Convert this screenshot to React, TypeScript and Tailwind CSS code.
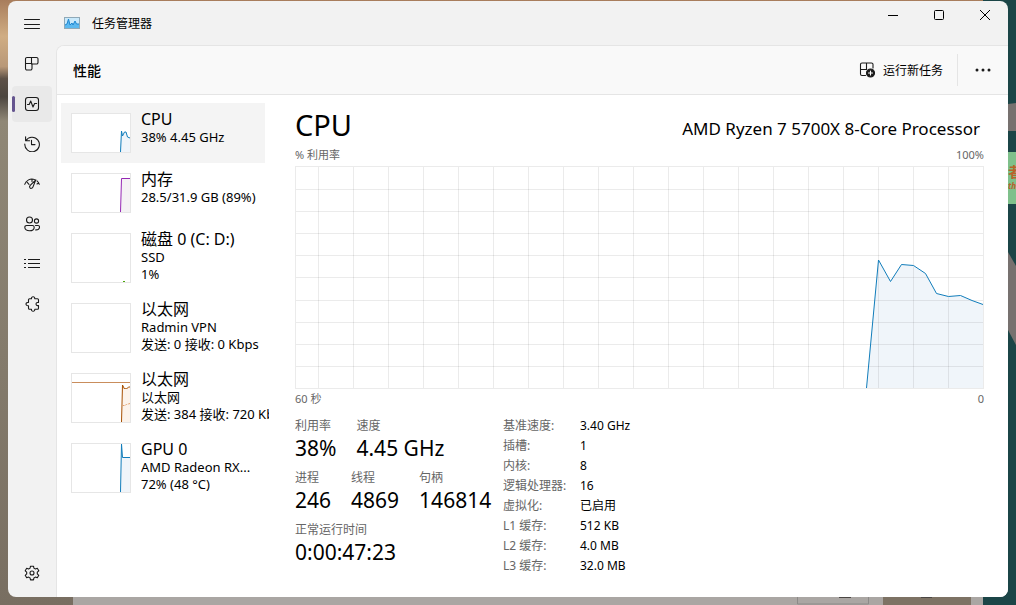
import React, { useState } from 'react';
import clsx from 'clsx';

interface ResourceItem {
  id: string;
  title: string;
  lines: string[];
  tall?: boolean;
  chart: React.ReactNode;
}

const iconProps = {
  width: 16,
  height: 16,
  viewBox: '0 0 16 16',
  fill: 'none',
  stroke: '#1b1b1b',
  strokeLinecap: 'round' as const,
  strokeLinejoin: 'round' as const,
};

const MenuIcon = () => (
  <svg {...iconProps} strokeWidth="1"><path d="M.5 3.5h15M.5 8.5h15M.5 12.5h15" /></svg>
);

const ProcessesIcon = () => (
  <svg {...iconProps} strokeWidth="1.1">
    <path d="M3 1.5h9.500a1.500 1.500 0 0 1 1.500 1.500v3.500a1.500 1.500 0 0 1-1.500 1.500H8v4.500A1.500 1.500 0 0 1 6.500 14H3a1.500 1.500 0 0 1-1.500-1.500V3A1.500 1.500 0 0 1 3 1.500ZM7.500 1.500V8M1.500 7.500H8" />
  </svg>
);

const PerformanceIcon = () => (
  <svg {...iconProps} strokeWidth="1.1">
    <rect x="1.500" y="1.500" width="13" height="13" rx="2.500" />
    <path d="M3.500 8.500h1.700L6.700 5l2.300 6 1.600-3.500h2" />
  </svg>
);

const HistoryIcon = () => (
  <svg {...iconProps} strokeWidth="1.1">
    <path d="M1.600 .8v3.900h4M1.900 4.600A7.300 7.300 0 1 1 .8 8M7.500 4.300v4.300H11" />
  </svg>
);

const StartupIcon = () => (
  <svg {...iconProps} strokeWidth="1.100">
    <path d="M.7 8.300A7.600 7.600 0 0 1 10.400 3.500M13 4.800a7.500 7.500 0 0 1 2.300 3.500M3.200 6.300l1.800 2M8 3.400v2.200M14.700 7l-1.700.9" />
    <path d="M11.800 3.800 6.200 9.400c-1.500 1.700 0 3.800 1.900 2.700.6-.4.8-.9 1-1.500l2.700-6.800Z" />
  </svg>
);

const UsersIcon = () => (
  <svg {...iconProps} strokeWidth="1.100">
    <circle cx="5.500" cy="4" r="3" />
    <circle cx="12.500" cy="5" r="2.100" />
    <path d="M2.500 9.500h6a1.700 1.700 0 0 1 1.700 1.700c0 2.300-2 3.600-4.700 3.600S.8 13.500.8 11.200A1.700 1.700 0 0 1 2.500 9.500ZM11.500 9.500H14a1.500 1.500 0 0 1 1.500 1.500c0 1.900-1.400 3-3.800 2.900" />
  </svg>
);

const DetailsIcon = () => (
  <svg {...iconProps} strokeWidth="1.200" strokeLinecap="butt">
    <path d="M0 3.500h2M4 3.500h12M0 7.500h2M4 7.500h12M0 11.500h2M4 11.500h12" />
  </svg>
);

const ServicesIcon = () => (
  <svg {...iconProps} strokeWidth="1.100">
    <path d="M5.500 2.700h2C7.300 1.500 8 .7 9.100.7s1.800.8 1.600 2h2.800a1 1 0 0 1 1 1v2.800h-.8c-2.200-.1-2.200 3.200 0 3.100h.8v2.700a1 1 0 0 1-1 1h-2.700c.1 1.200-.6 2-1.700 2s-1.800-.8-1.600-2h-2a1 1 0 0 1-1-1V9.700C3.100 9.900 2 9.200 2 8.100s1.100-1.900 2.500-1.600V3.700a1 1 0 0 1 1-1Z" />
  </svg>
);

const SettingsIcon = () => (
  <svg {...iconProps} strokeWidth="1.100">
    <path d="m6.500 1.200-.4 1.900-1.500.9-1.900-.7-1.500 2.500 1.500 1.400v1.700L1.200 10.300l1.500 2.500 1.900-.7 1.500.9.400 1.900h3l.4-1.900 1.500-.9 1.900.7 1.500-2.500-1.500-1.400V7.200l1.500-1.400-1.500-2.500-1.900.7-1.500-.9-.4-1.900Z" />
    <circle cx="8" cy="8" r="2" />
  </svg>
);

const RunTaskIcon = () => (
  <svg {...iconProps} strokeWidth="1.100">
    <path d="M6.500 13.500H3A1.500 1.500 0 0 1 1.500 12V2.500A1.500 1.500 0 0 1 3 1h9.500A1.500 1.500 0 0 1 14 2.500v3.500M7.500 1v6.500M1.500 7.500H7" />
    <circle cx="11.500" cy="11" r="4" fill="#1b1b1b" />
    <path d="M11.500 9v4M9.500 11h4" stroke="#fff" />
  </svg>
);

const AppIcon = () => (
  <svg width="16" height="12" viewBox="0 0 16 12">
    <rect x=".5" y=".5" width="15" height="11" fill="#c9e9fb" stroke="#8fa9b8" />
    <path d="M1 11V8l2-1 1.500-5L6 8l2-2 1 2 2-4 1.500 3H15v4Z" fill="#5bb9f0" />
    <path d="M1 8l2-1 1.500-5L6 8l2-2 1 2 2-4 1.500 3H15" fill="none" stroke="#1c86d1" />
  </svg>
);

const navItems = [
  { label: '进程', icon: ProcessesIcon },
  { label: '性能', icon: PerformanceIcon },
  { label: '应用历史记录', icon: HistoryIcon },
  { label: '启动应用', icon: StartupIcon },
  { label: '用户', icon: UsersIcon },
  { label: '详细信息', icon: DetailsIcon },
  { label: '服务', icon: ServicesIcon },
];

const resources: ResourceItem[] = [
  {
    id: 'cpu',
    title: 'CPU',
    lines: ['38% 4.45 GHz'],
    chart: (
      <>
        <path d="M48 38 49.500 17l1 5 2-4h1.500l1.500 5 2.500 1v14Z" fill="#f0f5fa" />
        <path d="M48.500 38 49.500 17l1 5 2-4h1.500l1.500 5 2.500 1" fill="none" stroke="#117dbb" />
      </>
    ),
  },
  {
    id: 'memory',
    title: '内存',
    lines: ['28.5/31.9 GB (89%)'],
    chart: (
      <>
        <path d="M48.500 38 49.500 4.500H58V38Z" fill="#f4f2f4" />
        <path d="M48.500 38 49.500 4.500H58" fill="none" stroke="#9528b4" />
      </>
    ),
  },
  {
    id: 'disk',
    title: '磁盘 0 (C: D:)',
    lines: ['SSD', '1%'],
    tall: true,
    chart: <path d="M51 47.500h2" stroke="#4da60c" />,
  },
  { id: 'vpn', title: '以太网', lines: ['Radmin VPN', '发送: 0 接收: 0 Kbps'], tall: true, chart: null },
  {
    id: 'ethernet',
    title: '以太网',
    lines: ['以太网', '发送: 384 接收: 720 Kbps'],
    tall: true,
    chart: (
      <>
        <path d="M49.500 48 50.500 11l2 4 3-1 3-1v35Z" fill="#fcf3eb" />
        <path d="M0 8.500h58" stroke="#c98d5c" />
        <path d="M49.500 48 50.500 11l2 4 1-1 1 1 2-2H58" fill="none" stroke="#a74f01" />
        <path d="M50.500 31.500h2l2-1 3.500-1" fill="none" stroke="#dfa070" strokeDasharray="2 1" />
      </>
    ),
  },
  {
    id: 'gpu',
    title: 'GPU 0',
    lines: ['AMD Radeon RX...', '72% (48 °C)'],
    tall: true,
    chart: (
      <>
        <path d="M48.500 48 49.500 0l1 13.500H58V48Z" fill="#f0f5fa" />
        <path d="M48.500 48 49.500 0l1 13.500H58" fill="none" stroke="#117dbb" />
      </>
    ),
  },
];

const statRows = [
  [['利用率', '38%'], ['速度', '4.45 GHz']],
  [['进程', '246'], ['线程', '4869'], ['句柄', '146814']],
  [['正常运行时间', '0:00:47:23']],
];

const specs = [
  ['基准速度:', '3.40 GHz'],
  ['插槽:', '1'],
  ['内核:', '8'],
  ['逻辑处理器:', '16'],
  ['虚拟化:', '已启用'],
  ['L1 缓存:', '512 KB'],
  ['L2 缓存:', '4.0 MB'],
  ['L3 缓存:', '32.0 MB'],
];

const usagePoints = '571.5,222 583.5,94 595.5,115.5 606.5,98.5 618.5,99.5 630.5,107.5 641.5,127.5 653.5,130.5 665.5,129.5 677,134.5 688,138.5';
const gridX = Array.from({ length: 19 }, (_, i) => 23.5 + i * 35);
const gridY = [23, 45, 67, 89, 111, 134, 156, 178, 200];

// Desktop wallpaper that peeks out around the window
function Wallpaper() {
  return (
    <div className="absolute inset-0 overflow-hidden" aria-hidden="true">
      <svg className="h-full w-full" viewBox="0 0 1016 605" preserveAspectRatio="none">
        <defs>
          <linearGradient id="wall" x1="0" y1="0" x2="0" y2="1">
            <stop offset="0" stopColor="#a87d5c" />
            <stop offset=".06" stopColor="#d0ad83" />
            <stop offset=".11" stopColor="#b89878" />
            <stop offset=".13" stopColor="#5d5147" />
            <stop offset=".16" stopColor="#4c463f" />
            <stop offset=".2" stopColor="#8f8776" />
            <stop offset="1" stopColor="#786e61" />
          </linearGradient>
        </defs>
        <rect width="1016" height="605" fill="url(#wall)" />
        <rect x="73" y="590" width="910" height="15" fill="#aaa6a3" />
        <path d="M797.500 590v14h71v-14" fill="none" stroke="#8c8a88" />
        <rect x="883" y="590" width="88" height="15" fill="#7d7264" />
        <path d="M839 597.500h12M921 597.500h11" stroke="#4b4744" />
        <rect x="983" width="33" height="605" fill="#1b4547" />
        <path d="M1000 105 1016 103v28h-16Z" fill="#77716f" />
        <path d="M1008 252 1016 266v79l-8-15Z" fill="#77716f" />
        <rect x="1000" y="152" width="16" height="52" fill="#7fc08b" />
      </svg>
      <div className="absolute top-[162px] right-0 w-2 overflow-hidden font-bold text-[#b9632a]">
        <p className="text-sm leading-5">者</p>
        <p className="text-[8px] leading-2 italic">th</p>
      </div>
    </div>
  );
}

function UsageChart() {
  return (
    <svg className="block h-[223px] w-full" viewBox="0 0 689 223" preserveAspectRatio="none" role="img" aria-label="CPU 利用率">
      <polygon points={`${usagePoints} 688,222`} fill="#f0f5fa" />
      <g stroke="#000" strokeOpacity=".08" shapeRendering="crispEdges">
        {gridX.map(x => <path key={x} d={`M${x} 1V222`} />)}
        {gridY.map(y => <path key={y} d={`M1 ${y + 0.5}H688`} />)}
        <rect x=".5" y=".5" width="688" height="222" fill="none" />
      </g>
      <polyline points={usagePoints} fill="none" stroke="#117dbb" />
    </svg>
  );
}

export default function App() {
  const [page, setPage] = useState('性能');
  const [selected, setSelected] = useState('cpu');

  return (
    <div className="relative flex min-h-screen px-2 pt-px pb-2 font-['Noto_Sans','Noto_Sans_CJK_SC',sans-serif] text-xs text-black">
      <Wallpaper />

      <div className="relative flex flex-1 overflow-hidden rounded-lg bg-[#f2f2f2]">
        {/* Rail */}
        <nav className="flex w-12 shrink-0 flex-col gap-1 px-1 pt-[5px] pb-1.5">
          <button aria-label="菜单" className="flex h-9 items-center justify-center rounded">
            <MenuIcon />
          </button>
          {navItems.map(({ label, icon: Icon }) => (
            <button
              key={label}
              aria-label={label}
              onClick={() => setPage(label)}
              className={clsx('relative flex h-9 items-center justify-center rounded', page === label && 'bg-[#e9e9e9]')}
            >
              {page === label && <span className="absolute top-2.5 left-0 h-4 w-[3px] rounded-full bg-[#65558f]" />}
              <Icon />
            </button>
          ))}
          <button aria-label="设置" className="mt-auto flex h-9 items-center justify-center rounded">
            <SettingsIcon />
          </button>
        </nav>

        <div className="flex min-w-0 flex-1 flex-col">
          {/* Title bar */}
          <header className="flex h-11 items-center pl-2">
            <AppIcon />
            <h1 className="ml-3 pt-0.5">任务管理器</h1>
            <div className="ml-auto flex self-start">
              <button aria-label="最小化" className="flex h-7 w-[46px] items-center justify-center">
                <svg width="10" height="10" stroke="#000"><path d="M0 5.500h10" /></svg>
              </button>
              <button aria-label="最大化" className="flex h-7 w-[46px] items-center justify-center">
                <svg width="10" height="10" stroke="#000" fill="none"><rect x=".5" y=".5" width="9" height="9" rx="1" /></svg>
              </button>
              <button aria-label="关闭" className="flex h-7 w-[46px] items-center justify-center">
                <svg width="10" height="10" stroke="#000"><path d="m0 0 10 10M10 0 0 10" /></svg>
              </button>
            </div>
          </header>

          <div className="flex flex-1 flex-col overflow-hidden rounded-tl-lg border-t border-l border-[#e5e5e5] bg-white">
            {/* Command bar */}
            <div className="flex h-[49px] shrink-0 items-center border-b border-[#e5e5e5] bg-[#f9f9f9] pl-4">
              <h2 className="pt-0.5 text-sm font-medium">{page}</h2>
              <button className="ml-auto flex h-8 items-center gap-2 pr-3.5">
                <RunTaskIcon />
                <span className="pt-0.5">运行新任务</span>
              </button>
              <button aria-label="更多" className="flex h-8 w-[51px] items-center justify-center border-l border-[#e5e5e5]">
                <svg width="16" height="4" fill="#1b1b1b"><circle cx="2" cy="2" r="1.500" /><circle cx="8" cy="2" r="1.500" /><circle cx="14" cy="2" r="1.500" /></svg>
              </button>
            </div>

            <div className="flex flex-1 pt-2 pl-1">
              {/* Resource list */}
              <div className="w-[204px] shrink-0">
                {resources.map(item => (
                  <button
                    key={item.id}
                    onClick={() => setSelected(item.id)}
                    className={clsx(
                      'flex w-full items-start gap-2.5 pl-2.5 text-left',
                      item.tall ? 'h-[70px]' : 'h-[60px]',
                      selected === item.id && 'bg-[#f4f4f4]'
                    )}
                  >
                    <span className={clsx('mt-2.5 w-[60px] shrink-0 border border-[#e6e6e6] bg-white', item.tall ? 'h-[50px]' : 'h-10')}>
                      <svg className="block h-full w-full">{item.chart}</svg>
                    </span>
                    <span className="mt-1.5 block w-32 shrink-0 overflow-hidden whitespace-nowrap">
                      <span className="block text-base leading-5">{item.title}</span>
                      {item.lines.map(line => (
                        <span key={line} className="block text-[13px] leading-[17px]">{line}</span>
                      ))}
                    </span>
                  </button>
                ))}
              </div>

              {/* Details */}
              <main className="min-w-0 flex-1 pr-6 pl-[30px]">
                <div className="flex h-11 items-center justify-between pr-1">
                  <h3 className="text-[29px] leading-10">CPU</h3>
                  <p className="pt-2 text-[17px] leading-6">AMD Ryzen 7 5700X 8-Core Processor</p>
                </div>
                <div className="flex h-[19px] justify-between text-[11px] leading-4 text-[#666]">
                  <span>% 利用率</span>
                  <span>100%</span>
                </div>
                <UsageChart />
                <div className="mt-0.5 flex justify-between text-[11px] leading-4 text-[#666]">
                  <span>60 秒</span>
                  <span>0</span>
                </div>

                <div className="mt-[9px] flex">
                  <div className="flex w-52 shrink-0 flex-col gap-2 pt-0.5">
                    {statRows.map((row, i) => (
                      <dl key={i} className="flex gap-5 whitespace-nowrap">
                        {row.map(([label, value]) => (
                          <div key={label}>
                            <dt className="text-xs leading-4 text-[#666]">{label}</dt>
                            <dd className="text-[21px] leading-7">{value}</dd>
                          </div>
                        ))}
                      </dl>
                    ))}
                  </div>
                  <table className="self-start text-left text-xs leading-5">
                    <tbody>
                      {specs.map(([label, value]) => (
                        <tr key={label}>
                          <th scope="row" className="w-[77px] p-0 font-normal whitespace-nowrap text-[#666]">{label}</th>
                          <td className="p-0 whitespace-nowrap">{value}</td>
                        </tr>
                      ))}
                    </tbody>
                  </table>
                </div>
              </main>
            </div>
          </div>
        </div>
      </div>
    </div>
  );
}
